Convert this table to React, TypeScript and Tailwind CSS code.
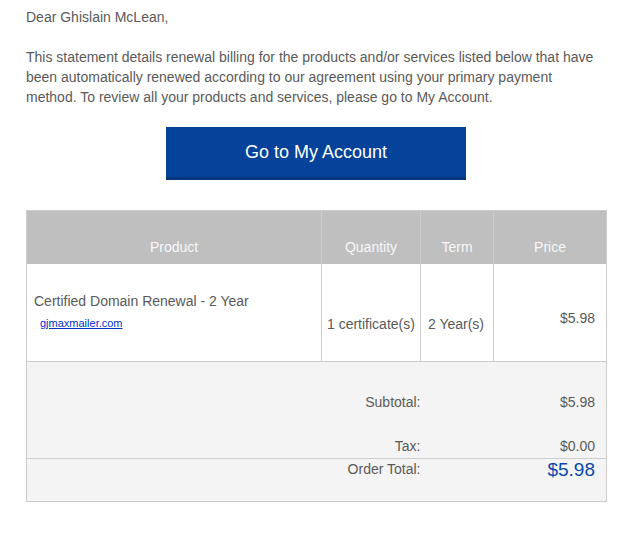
const items = [
  {
    name: "Certified Domain Renewal - 2 Year",
    domain: "gjmaxmailer.com",
    quantity: "1 certificate(s)",
    term: "2 Year(s)",
    price: "$5.98",
  },
]

export default function App() {
  return (
    <div className="min-h-screen bg-white font-['Liberation_Sans',Arial,sans-serif] text-[14px] leading-[20px] text-[#5a5a5a]">
      <div className="ml-[26px] w-[580px] pt-[7px]">
        <p>Dear Ghislain McLean,</p>
        <p className="mt-[20px]">
          This statement details renewal billing for the products and/or
          services listed below that have been automatically renewed according
          to our agreement using your primary payment method. To review all
          your products and services, please go to My Account.
        </p>

        <div className="mt-[20px] flex justify-center">
          <a
            href="#"
            className="flex h-[53px] w-[300px] items-center justify-center border-b-[3px] border-[#06377a] bg-[#044399] text-[18px] text-white"
          >
            Go to My Account
          </a>
        </div>

        <table className="mt-[30px] w-[580px] table-fixed border-collapse border border-[#cccccc]">
          <colgroup>
            <col className="w-[295px]" />
            <col className="w-[99px]" />
            <col className="w-[73px]" />
            <col className="w-[113px]" />
          </colgroup>
          <thead>
            <tr className="h-[53px] bg-[#bfbfbf] text-[#f7f7f7]">
              <th className="border-x border-[#cccccc] pb-[7px] align-bottom font-normal">
                Product
              </th>
              <th className="border-x border-[#cccccc] pb-[7px] align-bottom font-normal">
                Quantity
              </th>
              <th className="border-x border-[#cccccc] pb-[7px] align-bottom font-normal">
                Term
              </th>
              <th className="border-x border-[#cccccc] pb-[7px] align-bottom font-normal">
                Price
              </th>
            </tr>
          </thead>
          <tbody>
            {items.map((item) => (
              <tr key={item.name} className="h-[98px] border-b border-[#cccccc] bg-white">
                <td className="border-x border-[#cccccc] pl-[7px] pt-[27px] align-top">
                  <div>{item.name}</div>
                  <a
                    href="#"
                    className="mt-[5px] ml-[6px] block text-[11px] leading-[14px] text-[#0033cc] underline"
                  >
                    {item.domain}
                  </a>
                </td>
                <td className="border-x border-[#cccccc] pl-[5px] pt-[50px] align-top whitespace-nowrap">
                  {item.quantity}
                </td>
                <td className="border-x border-[#cccccc] pl-[7px] pt-[50px] align-top">
                  {item.term}
                </td>
                <td className="border-x border-[#cccccc] pr-[11px] pt-[44px] text-right align-top">
                  {item.price}
                </td>
              </tr>
            ))}
          </tbody>
          <tbody className="bg-[#f4f4f4]">
            <tr>
              <td colSpan={2} className="pt-[30px] text-right">
                Subtotal:
              </td>
              <td colSpan={2} className="pt-[30px] pr-[11px] text-right">
                $5.98
              </td>
            </tr>
            <tr className="border-b border-[#cccccc]">
              <td colSpan={2} className="pt-[24px] pb-[2px] text-right">
                Tax:
              </td>
              <td colSpan={2} className="pt-[24px] pb-[2px] pr-[11px] text-right">
                $0.00
              </td>
            </tr>
            <tr>
              <td colSpan={2} className="pb-[20px] text-right align-top">
                Order Total:
              </td>
              <td
                colSpan={2}
                className="pb-[20px] pr-[11px] text-right align-top text-[19px] leading-[22px] text-[#0b48ad]"
              >
                $5.98
              </td>
            </tr>
          </tbody>
        </table>
      </div>
    </div>
  )
}
